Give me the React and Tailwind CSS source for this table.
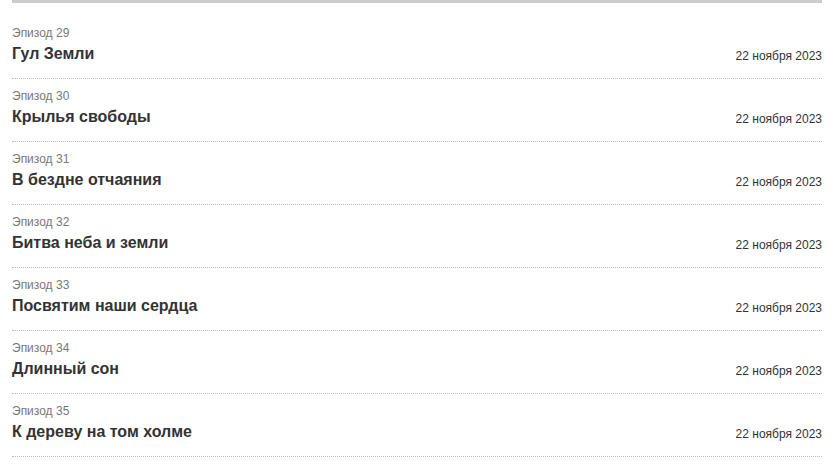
import React from 'react';

const episodes = [
  { num: 29, title: 'Гул Земли' },
  { num: 30, title: 'Крылья свободы' },
  { num: 31, title: 'В бездне отчаяния' },
  { num: 32, title: 'Битва неба и земли' },
  { num: 33, title: 'Посвятим наши сердца' },
  { num: 34, title: 'Длинный сон' },
  { num: 35, title: 'К дереву на том холме' },
];

export default function App() {
  return (
    <div className="min-h-screen bg-white pl-3 pr-[17px] font-['Liberation_Sans',Arial,sans-serif]">
      <div className="h-[3px] bg-[#cccccc]" />
      <ul className="mt-[13px]">
        {episodes.map((ep) => (
          <li
            key={ep.num}
            className="flex items-end justify-between border-b border-dotted border-[#bbbbbb] pt-[10px] pb-[14px]"
          >
            <div>
              <p className="text-[12px] leading-[14px] text-[#777777]">Эпизод {ep.num}</p>
              <h3 className="mt-1 text-[16px] font-bold leading-5 text-[#333333]">{ep.title}</h3>
            </div>
            <span className="text-[12px] leading-4 text-[#333333]">22 ноября 2023</span>
          </li>
        ))}
      </ul>
    </div>
  );
}
